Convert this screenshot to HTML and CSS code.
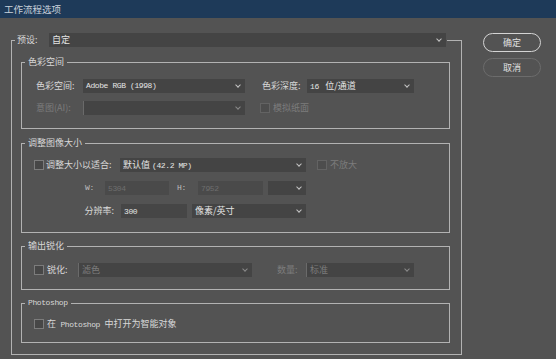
FILE: index.html
```html
<!DOCTYPE html>
<html lang="zh-CN">
<head>
  <meta charset="UTF-8" />
  <title>工作流程选项</title>
  <link rel="stylesheet" href="styles.css">
</head>
<body>
<div class="titlebar">工作流程选项</div>

<div class="dialog">
  <fieldset class="preset">
    <legend>
      <div class="preset-row">
        <span class="preset-label">预设:</span>
        <div class="select sel-preset"><span>自定</span><i class="chev"></i></div>
      </div>
    </legend>

    <fieldset class="group color">
      <legend>色彩空间</legend>
      <div class="color-grid">
        <span>色彩空间:</span>
        <div class="select sel-space"><span class="en">Adobe RGB (1998)</span><i class="chev"></i></div>
        <span class="col3">色彩深度:</span>
        <div class="select sel-depth"><span><span class="en">16&nbsp;</span> 位/通道</span><i class="chev"></i></div>

        <span class="off">意图(AI):</span>
        <div class="select sel-space off"><span></span><i class="chev"></i></div>
        <div class="opt off"><span class="cb dim"></span><span>模拟纸面</span></div>
      </div>
    </fieldset>

    <fieldset class="group resize">
      <legend>调整图像大小</legend>
      <div class="rows">
        <div class="row">
          <span class="cb"></span>
          <span class="fit-label">调整大小以适合:</span>
          <div class="select sel-fit"><span>默认值 <span class="en">(42.2 MP)</span></span><i class="chev"></i></div>
          <span class="cb dim grow-cb"></span>
          <span class="off">不放大</span>
        </div>
        <div class="row size-row">
          <span class="en dim-label">W:</span>
          <div class="input off w-input"><span class="en">5304</span></div>
          <span class="en dim-label h-label">H:</span>
          <div class="input off h-input"><span class="en">7952</span></div>
          <div class="select sel-small"><span></span><i class="chev"></i></div>
        </div>
        <div class="row">
          <span class="res-label">分辨率:</span>
          <div class="input res-input"><span class="en">300</span></div>
          <div class="select sel-unit"><span>像素/英寸</span><i class="chev"></i></div>
        </div>
      </div>
    </fieldset>

    <fieldset class="group sharpen">
      <legend>输出锐化</legend>
      <div class="row">
        <span class="cb"></span>
        <span class="sharp-label">锐化:</span>
        <div class="select sel-sharpen off"><span>滤色</span><i class="chev"></i></div>
        <span class="amount-label off">数量:</span>
        <div class="select sel-amount off"><span>标准</span><i class="chev"></i></div>
      </div>
    </fieldset>

    <fieldset class="group ps">
      <legend class="en">Photoshop</legend>
      <div class="row">
        <span class="cb"></span>
        <span class="ps-label">在<span class="en">&nbsp;Photoshop&nbsp;</span>中打开为智能对象</span>
      </div>
    </fieldset>
  </fieldset>

  <div class="buttons">
    <button class="btn primary">确定</button>
    <button class="btn">取消</button>
  </div>
</div>
</body>
</html>
```

FILE: styles.css
```css
* {
  margin: 0;
  padding: 0;
  box-sizing: border-box;
}

body {
  width: 556px;
  height: 359px;
  overflow: hidden;
  background: #535353;
  color: #d8d8d8;
  font-family: "Noto Sans CJK SC", sans-serif;
  font-size: 9px;
  line-height: 14px;
}

.en {
  font-family: "Liberation Mono", "Noto Sans CJK SC", monospace;
  font-size: 8px;
  letter-spacing: -0.4px;
}

.titlebar {
  height: 18px;
  line-height: 18px;
  padding-left: 4px;
  background: #1e3a59;
  color: #c9d2dc;
  font-size: 9.5px;
}

.dialog {
  display: flex;
  align-items: flex-start;
}

fieldset {
  border: 1px solid #b2b2b2;
  min-width: 0;
}

/* outer group: preset row acts as the legend */
.preset {
  width: 451px;
  margin: 15px 0 0 11px;
  padding: 0 11px 11px 9px;
}

.preset > legend {
  margin-left: -6px;
  padding: 0 1px 0 2px;
}

.preset-row {
  display: flex;
  align-items: center;
  height: 14px;
}

.preset-label {
  width: 32px;
}

.select {
  height: 14px;
  display: flex;
  align-items: center;
  justify-content: space-between;
  padding: 0 5px 0 3px;
  background: #444;
  color: #e4e4e4;
  white-space: nowrap;
}

.select.off {
  color: #7c7c7c;
  border-left: 1px solid #6a6a6a;
}

.chev {
  width: 4px;
  height: 4px;
  margin-top: -3px;
  border-right: 1px solid #c4c4c4;
  border-bottom: 1px solid #c4c4c4;
  transform: rotate(45deg);
}

.select.off .chev {
  border-color: #8a8a8a;
}

.sel-preset { width: 397px; }
.sel-space { width: 162px; }
.sel-depth { width: 107px; }
.sel-fit { width: 186px; }
.sel-small { width: 38px; margin-left: 5px; }
.sel-unit { width: 114px; margin-left: 5px; }
.sel-sharpen { width: 174px; }
.sel-amount { width: 108px; }

.input {
  height: 14px;
  padding-left: 3px;
  background: #464646;
  color: #e4e4e4;
}

.input.off {
  background: #4a4a4a;
  color: #6e6e6e;
}

.off {
  color: #7c7c7c;
}

.cb {
  width: 10px;
  height: 10px;
  flex: none;
  border: 1px solid #7c7c7c;
  background: #474747;
}

.cb.dim {
  border-color: #636363;
  background: #4d4d4d;
}

/* inner groups */
.group {
  width: 429px;
  margin-top: 9px;
  padding: 11px 12px 13px 12px;
}

.group legend {
  margin-left: -9px;
  padding: 0 3px;
  line-height: 12px;
}

.group legend.en {
  font-size: 8px;
}

.color-grid {
  display: grid;
  grid-template-columns: 47px 162px 62px 107px;
  grid-auto-rows: 14px;
  row-gap: 8px;
  align-items: center;
  margin-left: 2px;
}

.col3 {
  padding-left: 17px;
  white-space: nowrap;
}

.opt {
  grid-column: 3 / 5;
  display: flex;
  align-items: center;
  gap: 3px;
  padding-left: 15px;
}

.resize {
  margin-top: 8px;
  padding: 9px 12px 14px 12px;
}

.rows {
  display: flex;
  flex-direction: column;
  gap: 9px;
}

.row {
  display: flex;
  align-items: center;
  height: 14px;
}

.fit-label {
  width: 74px;
  margin-left: 2px;
}

.grow-cb {
  margin: 0 3px 0 11px;
}

.size-row {
  padding-left: 51px;
}

.dim-label {
  width: 20px;
  color: #bdbdbd;
}

.h-label {
  width: 21px;
  margin-left: 8px;
}

.w-input { width: 64px; }
.h-input { width: 65px; }

.res-label {
  width: 84px;
  padding-right: 4px;
  text-align: right;
}

.res-input {
  width: 66px;
  margin-left: 3px;
}

.sharpen {
  margin-top: 7px;
  padding: 11px 12px 12px 12px;
}

.sharp-label {
  width: 31px;
  margin-left: 3px;
}

.amount-label {
  width: 29px;
  margin-left: 25px;
}

.ps {
  margin-top: 7px;
  padding: 8px 12px 11px 12px;
}

.ps-label {
  margin-left: 3px;
}

.buttons {
  display: flex;
  flex-direction: column;
  gap: 6px;
  margin: 15px 0 0 21px;
}

.btn {
  width: 58px;
  height: 19px;
  border: 1px solid #6c6c6c;
  border-radius: 10px;
  background: #535353;
  color: #e0e0e0;
  font-family: "Noto Sans CJK SC", sans-serif;
  font-size: 9px;
}

.btn.primary {
  border: 1.5px solid #d4d4d4;
}
```
